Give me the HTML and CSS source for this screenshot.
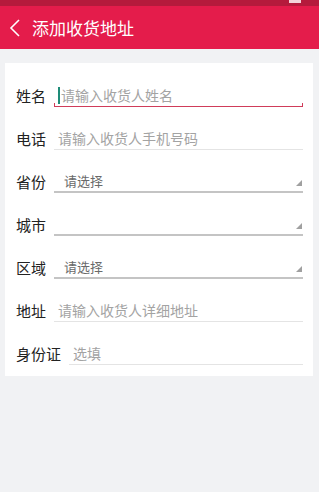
FILE: index.html
```html
<!DOCTYPE html>
<html lang="zh-CN">
<head>
    <meta charset="UTF-8">
    <meta name="viewport" content="width=device-width, initial-scale=1.0">
    <title>添加收货地址</title>
    <link rel="stylesheet" href="styles.css">
</head>
<body>
    <div class="screen">
        <div class="status-bar">
            <span class="battery"></span>
        </div>
        <div class="header">
            <svg class="back" width="12" height="18" viewBox="0 0 12 18">
                <path d="M10 1 L2 9 L10 17" fill="none" stroke="#fff" stroke-width="1.6"/>
            </svg>
            <h1>添加收货地址</h1>
        </div>
        <div class="card">
            <div class="form-row">
                <label>姓名</label>
                <div class="field focused"><span class="cursor"></span><span class="hint">请输入收货人姓名</span></div>
            </div>
            <div class="form-row">
                <label>电话</label>
                <div class="field"><span class="hint">请输入收货人手机号码</span></div>
            </div>
            <div class="form-row">
                <label>省份</label>
                <div class="field select"><span class="choice">请选择</span></div>
            </div>
            <div class="form-row">
                <label>城市</label>
                <div class="field select"><span class="choice"></span></div>
            </div>
            <div class="form-row">
                <label>区域</label>
                <div class="field select"><span class="choice">请选择</span></div>
            </div>
            <div class="form-row">
                <label>地址</label>
                <div class="field"><span class="hint">请输入收货人详细地址</span></div>
            </div>
            <div class="form-row">
                <label>身份证</label>
                <div class="field"><span class="hint">选填</span></div>
            </div>
        </div>
    </div>
</body>
</html>
```

FILE: styles.css
```css
body {
    margin: 0;
    width: 330px;
    height: 503px;
    background-color: #fff;
    font-family: "Noto Sans CJK SC", "Noto Sans", sans-serif;
    overflow: hidden;
}
.screen {
    width: 319px;
    height: 492px;
    background-color: #f1f2f4;
}
.status-bar {
    height: 6px;
    background-color: #b51a3c;
    position: relative;
}
.battery {
    position: absolute;
    right: 18px;
    top: 0;
    width: 12px;
    height: 3px;
    background-color: #f3d3da;
}
.header {
    height: 43px;
    background-color: #e41c4b;
    display: flex;
    align-items: center;
    padding-left: 9px;
}
.header .back {
    margin-right: 11px;
}
.header h1 {
    margin: 0;
    font-size: 17px;
    font-weight: normal;
    color: #fff;
    line-height: 20px;
}
.card {
    margin: 14px 6px 0 5px;
    background-color: #fff;
    padding: 11px 10px 0 11px;
    height: 302px;
}
.form-row {
    height: 43px;
    display: flex;
    align-items: center;
}
.form-row label {
    font-size: 15px;
    color: #222;
    margin-right: 8px;
    line-height: 16px;
}
.field {
    flex: 1;
    height: 16px;
    line-height: 16px;
    padding: 3px 0 3px 4px;
    border-bottom: 1px solid #e4e4e4;
    position: relative;
    display: flex;
    align-items: center;
}
.field.focused {
    border-bottom: 1px solid #d03c5a;
}
.field.focused::before,
.field.focused::after {
    content: "";
    position: absolute;
    bottom: 0;
    width: 1px;
    height: 3px;
    background-color: #d03c5a;
}
.field.focused::before {
    left: 0;
}
.field.focused::after {
    right: 0;
}
.cursor {
    width: 2px;
    height: 17px;
    background-color: #1e8c78;
    margin-right: 1px;
}
.hint {
    font-size: 14px;
    color: #a3a3a3;
}
.field.select {
    border-bottom: 2px solid #c4c4c4;
    padding-left: 10px;
    height: 15px;
}
.choice {
    font-size: 13px;
    color: #6a6a6a;
}
.field.select::after {
    content: "";
    position: absolute;
    right: 1px;
    bottom: 5px;
    width: 0;
    height: 0;
    border-left: 6px solid transparent;
    border-bottom: 6px solid #a0a0a0;
}
```
